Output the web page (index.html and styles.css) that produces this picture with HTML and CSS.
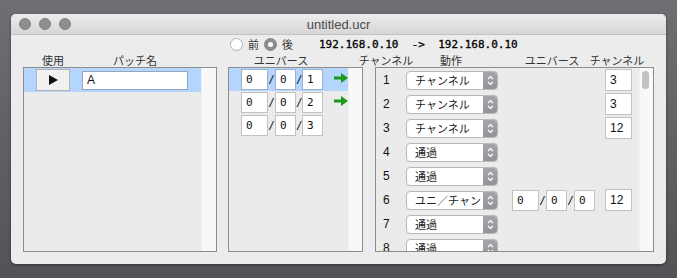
FILE: index.html
```html
<!DOCTYPE html>
<html lang="ja">
<head>
    <meta charset="UTF-8">
    <title>untitled.ucr</title>
    <link rel="stylesheet" href="styles.css">
</head>
<body>

    <div class="window">
        <!-- Title bar -->
        <div class="titlebar">
            <div class="lights">
                <span class="light"></span>
                <span class="light"></span>
                <span class="light"></span>
            </div>
            <div class="title">untitled.ucr</div>
            <div></div>
        </div>

        <div class="content">
            <!-- Before / after + addresses -->
            <div class="topbar">
                <span class="radio"></span>
                <span class="radio-label">前</span>
                <span class="radio checked"></span>
                <span class="radio-label">後</span>
                <span class="address">192.168.0.10&nbsp;&nbsp;-&gt;&nbsp;&nbsp;192.168.0.10</span>
            </div>

            <!-- Column headers -->
            <div class="headers">
                <span class="h-use">使用</span>
                <span class="h-name">パッチ名</span>
                <span class="h-universe">ユニバース</span>
                <span class="h-channel">チャンネル</span>
                <span class="h-action">動作</span>
                <span class="h-universe2">ユニバース</span>
                <span class="h-channel2">チャンネル</span>
            </div>

            <div class="panels">
                <!-- Patch list -->
                <div class="panel patches">
                    <div class="list">
                        <div class="patch-row selected">
                            <div class="play-btn">
                                <svg width="9" height="10" viewBox="0 0 9 10"><polygon points="0,0 9,5 0,10" fill="#111"/></svg>
                            </div>
                            <div class="name-field">A</div>
                        </div>
                    </div>
                    <div class="track wide"></div>
                </div>

                <!-- Input universes -->
                <div class="panel universes">
                    <div class="list">
                        <div class="uni-row selected">
                            <span class="field f-net">0</span><span class="slash">/</span><span class="field">0</span><span class="slash">/</span><span class="field">1</span>
                            <svg class="arrow" width="14" height="10" viewBox="0 0 14 10"><path d="M0 3.5h7V0l7 5-7 5V6.5H0z" fill="#1a9a1a"/></svg>
                        </div>
                        <div class="uni-row">
                            <span class="field f-net">0</span><span class="slash">/</span><span class="field">0</span><span class="slash">/</span><span class="field">2</span>
                            <svg class="arrow" width="14" height="10" viewBox="0 0 14 10"><path d="M0 3.5h7V0l7 5-7 5V6.5H0z" fill="#1a9a1a"/></svg>
                        </div>
                        <div class="uni-row">
                            <span class="field f-net">0</span><span class="slash">/</span><span class="field">0</span><span class="slash">/</span><span class="field">3</span>
                        </div>
                    </div>
                    <div class="track"></div>
                </div>

                <!-- Channel actions -->
                <div class="panel channels">
                    <div class="list" id="channel-list"></div>
                    <div class="track"><div class="thumb"></div></div>
                </div>
            </div>
        </div>
    </div>

    <script>
        // Channel rows: action label, optional universe, output channel
        const rows = [
            { action: 'チャンネル', channel: '3' },
            { action: 'チャンネル', channel: '3' },
            { action: 'チャンネル', channel: '12' },
            { action: '通過' },
            { action: '通過' },
            { action: 'ユニ／チャン', universe: ['0', '0', '0'], channel: '12' },
            { action: '通過' },
            { action: '通過' }
        ];

        const list = document.getElementById('channel-list');

        rows.forEach((row, i) => {
            const div = document.createElement('div');
            div.className = 'ch-row';

            let html = `<span class="num">${i + 1}</span>`;
            html += `<div class="popup"><span class="popup-text">${row.action}</span>` +
                `<span class="popup-arrows"><svg width="7" height="11" viewBox="0 0 7 11">` +
                `<path d="M1 4L3.5 1.5L6 4M1 7L3.5 9.5L6 7" fill="none" stroke="#fff" stroke-width="1.2"/></svg></span></div>`;

            if (row.universe) {
                html += `<div class="ch-universe"><span class="field f-net">${row.universe[0]}</span><span class="slash">/</span>` +
                    `<span class="field">${row.universe[1]}</span><span class="slash">/</span><span class="field">${row.universe[2]}</span></div>`;
            }
            if (row.channel) {
                html += `<span class="ch-field">${row.channel}</span>`;
            }

            div.innerHTML = html;
            list.appendChild(div);
        });
    </script>

</body>
</html>
```

FILE: styles.css
```css
* {
    margin: 0;
    padding: 0;
    box-sizing: border-box;
}

body {
    width: 677px;
    height: 278px;
    overflow: hidden;
    padding: 14px 0 0 11px;
    background: linear-gradient(#6f6f73, #535357);
    font-family: 'Noto Sans CJK JP', 'Liberation Sans', sans-serif;
    font-size: 11px;
    color: #222;
}

/* Window */
.window {
    width: 655px;
    height: 250px;
    background-color: #ececec;
    border-radius: 5px;
    overflow: hidden;
    box-shadow: 0 1px 3px rgba(0, 0, 0, 0.45);
    display: flex;
    flex-direction: column;
}

.titlebar {
    height: 21px;
    display: grid;
    grid-template-columns: 1fr auto 1fr;
    align-items: center;
    background: linear-gradient(#ececec, #d6d6d6);
    border-bottom: 1px solid #c2c2c2;
}

.lights {
    display: flex;
    gap: 8px;
    padding-left: 8px;
}

.light {
    width: 12px;
    height: 12px;
    border-radius: 50%;
    background-color: #8e8e92;
    border: 1px solid #818185;
}

.title {
    font-family: 'Liberation Sans', sans-serif;
    font-size: 13px;
    color: #4a4a4a;
}

.content {
    padding: 0 12px;
    display: flex;
    flex-direction: column;
}

/* Radio + address line */
.topbar {
    height: 18px;
    display: flex;
    align-items: center;
}

.radio {
    width: 13px;
    height: 13px;
    border-radius: 50%;
    background-color: #fff;
    border: 1px solid #b3b3b3;
}

.radio:first-child {
    margin-left: 207px;
}

.radio.checked {
    margin-left: 5px;
    background-color: #8d8d8d;
    border-color: #858585;
    display: flex;
    align-items: center;
    justify-content: center;
}

.radio.checked::after {
    content: '';
    width: 5px;
    height: 5px;
    border-radius: 50%;
    background-color: #fff;
}

.radio-label {
    margin-left: 5px;
    font-size: 11px;
    color: #333;
}

.address {
    margin-left: 26px;
    font-family: 'DejaVu Sans Mono', monospace;
    font-size: 11px;
    color: #000;
    -webkit-text-stroke: 0.3px #000;
}

/* Column headers */
.headers {
    height: 14px;
    display: flex;
    line-height: 14px;
    color: #333;
}

.headers span {
    display: flex;
    justify-content: center;
    white-space: nowrap;
}

.h-use { width: 60px; }
.h-name { width: 104px; }
.h-universe { width: 188px; }
.h-channel { width: 22px; }
.h-action { width: 108px; }
.h-universe2 { width: 94px; }
.h-channel2 { width: 36px; }

/* Panels */
.panels {
    display: flex;
    height: 185px;
}

.panel {
    display: flex;
    border: 1px solid #8d8d8d;
    background-color: #ebebeb;
    overflow: hidden;
}

.patches { width: 194px; }
.universes { width: 135px; margin-left: 11px; }
.channels { width: 279px; margin-left: 12px; }

.list {
    flex: 1;
    overflow: hidden;
}

.track {
    width: 14px;
    background-color: #f8f8f8;
    border-left: 1px solid #f0f0f0;
}

.track.wide {
    width: 15px;
}

.thumb {
    width: 7px;
    height: 18px;
    margin: 3px 0 0 2px;
    border-radius: 4px;
    background-color: #c2c2c2;
}

.selected {
    background-color: #b4d5fd;
}

/* Patch rows */
.patch-row {
    height: 24px;
    display: flex;
    align-items: center;
}

.play-btn {
    width: 34px;
    height: 22px;
    margin-left: 12px;
    background-color: #f1f1f1;
    border: 1px solid #b2b2b2;
    display: flex;
    align-items: center;
    justify-content: center;
}

.name-field {
    width: 106px;
    height: 19px;
    margin-left: 12px;
    padding-left: 4px;
    background-color: #fff;
    border: 1px solid #93a7c2;
    font-family: 'Liberation Sans', sans-serif;
    font-size: 12px;
    line-height: 17px;
    color: #111;
}

/* Universe rows */
.uni-row {
    height: 23px;
    display: flex;
    align-items: center;
    padding-left: 12px;
}

.field {
    width: 21px;
    height: 21px;
    padding-left: 4px;
    background-color: #fff;
    border: 1px solid #c2c2c2;
    font-family: 'DejaVu Sans Mono', monospace;
    font-size: 11px;
    line-height: 19px;
    color: #111;
}

.field.f-net {
    width: 27px;
}

.selected .field {
    border-color: #9cb1cb;
}

.slash {
    width: 7px;
    text-align: center;
    font-family: 'DejaVu Sans Mono', monospace;
    font-size: 11px;
    color: #111;
}

.uni-row .slash + .field + .slash {
    width: 6px;
}

.arrow {
    margin: 0 0 3px 11px;
}

/* Channel rows */
.ch-row {
    height: 24px;
    display: flex;
    align-items: center;
    padding: 0 7px;
}

.num {
    width: 23px;
    font-family: 'Liberation Sans', sans-serif;
    font-size: 12px;
    color: #111;
}

.popup {
    width: 92px;
    height: 19px;
    display: flex;
    background-color: #fff;
    border: 1px solid #b8b8b8;
    border-radius: 4px;
    overflow: hidden;
}

.popup-text {
    flex: 1;
    padding-left: 8px;
    font-size: 11px;
    line-height: 17px;
    color: #222;
    white-space: nowrap;
    overflow: hidden;
}

.popup-arrows {
    width: 14px;
    flex-shrink: 0;
    display: flex;
    align-items: center;
    justify-content: center;
    background: linear-gradient(#a7a7ab, #929296);
}

.ch-universe {
    display: flex;
    align-items: center;
    margin-left: 14px;
}

.ch-universe .slash {
    width: 7px;
}

.ch-field {
    width: 27px;
    height: 22px;
    margin-left: auto;
    padding-left: 4px;
    background-color: #fff;
    border: 1px solid #c2c2c2;
    font-family: 'Liberation Sans', sans-serif;
    font-size: 12px;
    line-height: 20px;
    color: #111;
}
```
